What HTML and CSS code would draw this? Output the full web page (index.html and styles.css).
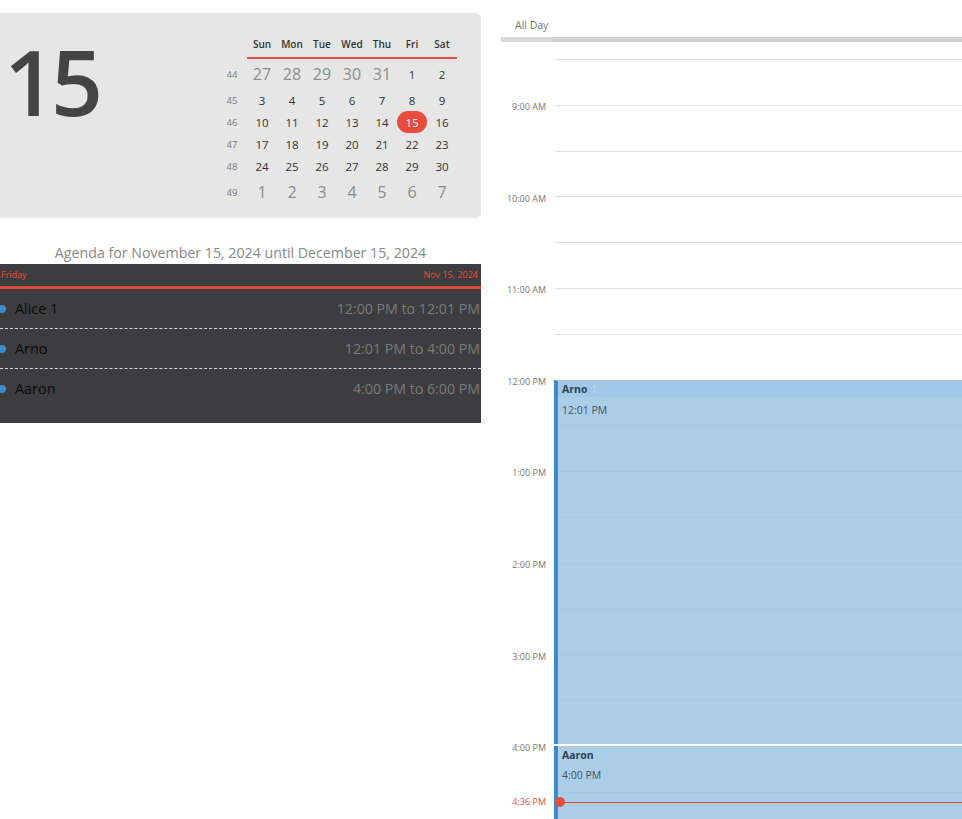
FILE: index.html
```html
<!DOCTYPE html>
<html>
<head>
<meta charset="utf-8">
<link rel="stylesheet" href="styles.css">
</head>
<body>
<div class="app">
  <div class="left">
    <div class="cal">
      <div class="bigday">15</div>
      <div class="month">
        <div class="wk"></div>
        <div class="dh">Sun</div><div class="dh">Mon</div><div class="dh">Tue</div><div class="dh">Wed</div><div class="dh">Thu</div><div class="dh">Fri</div><div class="dh">Sat</div>

        <div class="wk">44</div>
        <div class="d other">27</div><div class="d other">28</div><div class="d other">29</div><div class="d other">30</div><div class="d other">31</div><div class="d">1</div><div class="d">2</div>

        <div class="wk">45</div>
        <div class="d">3</div><div class="d">4</div><div class="d">5</div><div class="d">6</div><div class="d">7</div><div class="d">8</div><div class="d">9</div>

        <div class="wk">46</div>
        <div class="d">10</div><div class="d">11</div><div class="d">12</div><div class="d">13</div><div class="d">14</div><div class="d"><span class="sel">15</span></div><div class="d">16</div>

        <div class="wk">47</div>
        <div class="d">17</div><div class="d">18</div><div class="d">19</div><div class="d">20</div><div class="d">21</div><div class="d">22</div><div class="d">23</div>

        <div class="wk">48</div>
        <div class="d">24</div><div class="d">25</div><div class="d">26</div><div class="d">27</div><div class="d">28</div><div class="d">29</div><div class="d">30</div>

        <div class="wk">49</div>
        <div class="d other">1</div><div class="d other">2</div><div class="d other">3</div><div class="d other">4</div><div class="d other">5</div><div class="d other">6</div><div class="d other">7</div>
      </div>
    </div>

    <div class="agenda-title">Agenda for November 15, 2024 until December 15, 2024</div>
    <div class="agenda">
      <div class="ag-head"><span>Friday</span><span>Nov 15, 2024</span></div>
      <div class="ag-item"><span class="dot"></span><span class="ag-name">Alice 1</span><span class="ag-time">12:00 PM to 12:01 PM</span></div>
      <div class="ag-item"><span class="dot"></span><span class="ag-name">Arno</span><span class="ag-time">12:01 PM to 4:00 PM</span></div>
      <div class="ag-item last"><span class="dot"></span><span class="ag-name">Aaron</span><span class="ag-time">4:00 PM to 6:00 PM</span></div>
    </div>
  </div>

  <div class="right">
    <div class="allday">All Day</div>
    <div class="allday-bar"><div class="bar-gutter"></div><div class="bar-main"></div></div>
    <div class="grid">
      <div class="times">
        <div class="tl">9:00 AM</div>
        <div class="tl">10:00 AM</div>
        <div class="tl">11:00 AM</div>
        <div class="tl">12:00 PM</div>
        <div class="tl">1:00 PM</div>
        <div class="tl">2:00 PM</div>
        <div class="tl">3:00 PM</div>
        <div class="tl">4:00 PM</div>
      </div>
      <div class="day">
        <div class="pad-top"></div>
        <div class="slot"></div><div class="slot"></div><div class="slot"></div><div class="slot"></div>
        <div class="slot"></div><div class="slot"></div><div class="slot"></div><div class="slot"></div>
        <div class="slot"></div><div class="slot"></div><div class="slot"></div><div class="slot"></div>
        <div class="slot"></div><div class="slot"></div><div class="slot"></div><div class="slot"></div>
        <div class="slot"></div><div class="slot"></div>

        <div class="event ev-arno">
          <div class="ev-head">Arno <span class="ev-count">1</span></div>
          <div class="ev-time">12:01 PM</div>
        </div>
        <div class="event ev-aaron">
          <div class="ev-head plain">Aaron</div>
          <div class="ev-time">4:00 PM</div>
        </div>
      </div>
      <div class="now">
        <div class="now-label">4:36 PM</div>
        <div class="now-track"><div class="now-line"></div><span class="now-dot"></span></div>
      </div>
    </div>
  </div>
</div>
</body>
</html>
```

FILE: styles.css
```css
* { box-sizing: border-box; }

body {
  margin: 0;
  background: #fff;
  font-family: "Segoe UI", "Open Sans", "Noto Sans", sans-serif;
}

.app {
  display: flex;
  gap: 20px;
  height: 819px;
  overflow: hidden;
}

.left {
  width: 481px;
  flex: none;
  padding-top: 13px;
}

.right {
  flex: 1;
  min-width: 0;
  display: flex;
  flex-direction: column;
}

/* ---------- calendar panel ---------- */
.cal {
  background: #e6e6e6;
  border-radius: 0 5px 5px 0;
  height: 205px;
  display: flex;
  justify-content: space-between;
  padding: 20px 24px 11px 4px;
}

.bigday {
  font-size: 91px;
  font-weight: 600;
  line-height: 1;
  color: #444;
  letter-spacing: -5px;
  margin-top: 3px;
}

.month {
  display: grid;
  grid-template-columns: repeat(8, 30px);
  grid-template-rows: 26px 30px 22px 22px 22px 22px 30px;
  text-align: center;
}

.wk {
  font-size: 9.5px;
  color: #7a7a7a;
  display: flex;
  align-items: center;
  justify-content: center;
  padding-top: 1px;
}

.dh {
  font-size: 10px;
  font-weight: 600;
  color: #333;
  border-bottom: 2px solid #e74c3c;
  display: flex;
  align-items: center;
  justify-content: center;
  padding-bottom: 2px;
}

.d {
  font-size: 11.5px;
  color: #333;
  display: flex;
  align-items: center;
  justify-content: center;
}

.d.other {
  font-size: 16px;
  color: #8c8c8c;
}

.sel {
  display: inline-flex;
  align-items: center;
  justify-content: center;
  width: 30px;
  height: 22px;
  border-radius: 11px;
  background: #e74c3c;
  color: #fff;
}

/* ---------- agenda ---------- */
.agenda-title {
  margin-top: 25px;
  height: 21px;
  line-height: 20px;
  text-align: center;
  font-size: 14.2px;
  color: #888;
}

.agenda {
  background: #3d3d3f;
  padding-bottom: 15px;
}

.ag-head {
  height: 25px;
  display: flex;
  justify-content: space-between;
  align-items: center;
  padding: 0 3px 1px 1px;
  font-size: 9px;
  color: #e74c3c;
  border-bottom: 3px solid #e74c3c;
}

.ag-item {
  height: 40px;
  display: flex;
  align-items: center;
  border-bottom: 1px dashed #d8d8d8;
}

.ag-item.last { border-bottom: none; height: 39px; }

.dot {
  width: 8px;
  height: 8px;
  border-radius: 50%;
  background: #3d8bcd;
  margin-left: -2px;
  margin-right: 9px;
  flex: none;
}

.ag-name {
  font-size: 14.4px;
  color: #0a0a0a;
}

.ag-time {
  margin-left: auto;
  font-size: 14.2px;
  color: #7a7a7a;
  padding-right: 1px;
}

/* ---------- day view ---------- */
.allday {
  height: 37px;
  padding: 18px 0 0 14px;
  font-size: 10.5px;
  line-height: 14px;
  color: #777;
}

.allday-bar {
  height: 5px;
  display: flex;
  flex: none;
}

.bar-gutter { width: 51px; background: #d9d9d9; }
.bar-main { flex: 1; background: #d2d2d2; }

.grid {
  flex: 1;
  position: relative;
  overflow: hidden;
  display: grid;
  grid-template-columns: 54px 1fr;
}

.times {
  padding-top: 59px;
}

.tl {
  height: 91.6px;
  line-height: 12px;
  font-size: 9px;
  color: #777;
  text-align: right;
  padding-right: 9px;
}

.day {
  position: relative;
}

.pad-top { height: 17px; }

.slot {
  height: 45.8px;
  border-top: 1px solid #dddddd;
}

.event {
  position: absolute;
  left: -1px;
  right: 0;
  background: rgba(156, 198, 228, 0.86);
  border-left: 4px solid #3b8bcc;
}

.ev-arno {
  top: 338px;
  height: 364px;
  border-top: 1px solid #b4c8d8;
}

.ev-aaron {
  top: 704px;
  height: 200px;
}

.ev-head {
  height: 16px;
  line-height: 16px;
  padding-left: 4px;
  background: rgba(150, 195, 230, 0.45);
  font-size: 10.5px;
  font-weight: 700;
  color: #2e3f52;
}

.ev-head.plain {
  background: none;
  height: 19px;
  line-height: 19px;
}

.ev-count {
  font-weight: 400;
  color: #c4dbee;
  margin-left: 1px;
}

.ev-time {
  padding-left: 4px;
  margin-top: 6px;
  font-size: 10.5px;
  line-height: 14px;
  color: #44505c;
}

.ev-aaron .ev-time { margin-top: 3px; }

.now {
  position: absolute;
  z-index: 2;
  top: 754px;
  left: 0;
  right: 0;
  height: 12px;
  display: grid;
  grid-template-columns: 54px 1fr;
}

.now-label {
  font-size: 9px;
  line-height: 12px;
  height: 12px;
  color: #e74c3c;
  text-align: right;
  padding-right: 9px;
}

.now-track {
  position: relative;
  height: 12px;
  padding-top: 6px;
}

.now-line {
  height: 1px;
  background: #e74c3c;
}

.now-dot {
  position: absolute;
  left: 0;
  top: 1px;
  width: 10px;
  height: 10px;
  border-radius: 50%;
  background: #e74c3c;
}
```
